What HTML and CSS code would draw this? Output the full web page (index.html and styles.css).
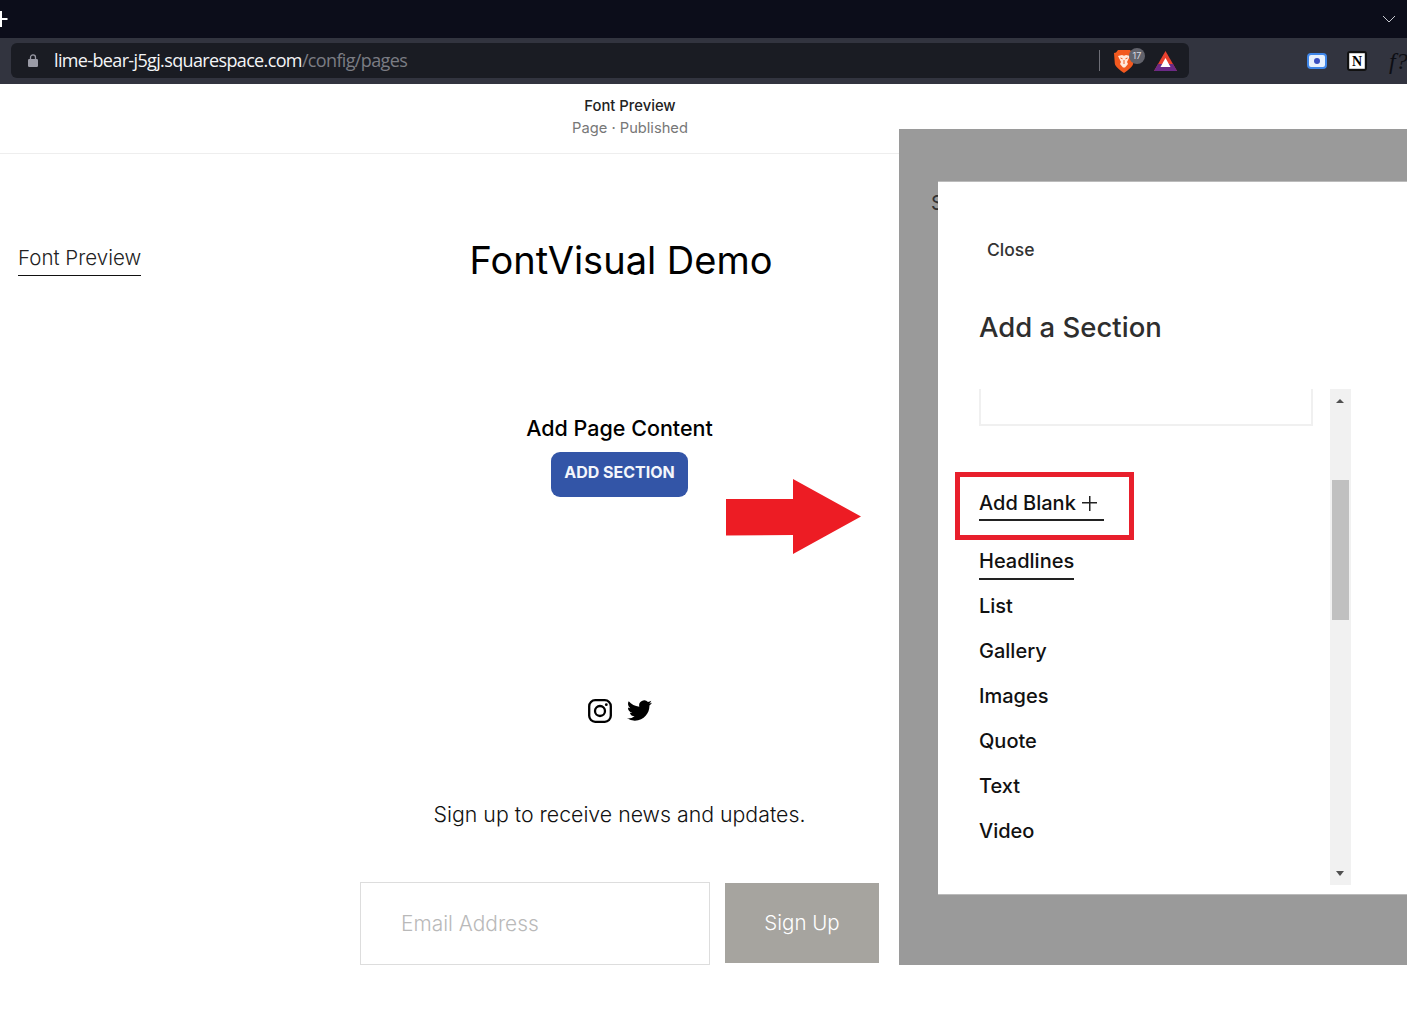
FILE: index.html
```html
<!DOCTYPE html>
<html>
<head>
    <title>Font Preview - Squarespace</title>
    <link rel="stylesheet" href="styles.css">
</head>
<body>
    <div class="tabbar">
        <svg class="new-tab" width="8" height="16" viewBox="0 0 8 16"><path d="M0 7h7.500v2H0zM0 0h2v16H0z" fill="#fff"/></svg>
        <svg class="tab-chevron" width="14" height="8" viewBox="0 0 14 8"><path d="M1 1l6 6 6-6" fill="none" stroke="#c8c9d0" stroke-width="1"/></svg>
    </div>
    <div class="toolbar">
        <div class="omnibox">
            <svg class="lock" width="10" height="13" viewBox="0 0 10 13"><path d="M2.500 5V3.400a2.500 2.500 0 0 1 5 0V5" fill="none" stroke="#9a9ba6" stroke-width="1.300"/><rect x="0" y="5" width="10" height="8" rx="1.200" fill="#9a9ba6"/></svg>
            <span class="url">lime-bear-j5gj.squarespace.com<span class="url-path">/config/pages</span></span>
            <span class="omni-sep"></span>
            <span class="brave">
                <svg width="20" height="23" viewBox="0 0 20 23"><path d="M4 0h12l2 2.500 2 .5-.8 10.500c-.3 3-5.700 7-9.200 9.500C6.500 20.500 1.100 16.500.8 13.500L0 3l2-.5z" fill="#f2591f"/><path d="M4 6l4-1 2 .8L12 5l4 1-1.500 3-1.500 3 1 2-3 3.500h-2L6 14l1-2-1.500-3z" fill="#ffe9dc"/><path d="M6.500 8l2 .8M13.500 8l-2 .8M10 10v4" fill="none" stroke="#f2591f" stroke-width="1"/></svg>
                <span class="brave-count">17</span>
            </span>
            <svg class="bat" width="23" height="20" viewBox="0 0 23 20"><path d="M11.500 0L23 20H0z" fill="#e8412f"/><path d="M0 20l4-7h15l4 7z" fill="#6b2a86"/><path d="M11.500 7l5 9h-10z" fill="#fff"/></svg>
        </div>
        <svg class="ext-record" width="20" height="16" viewBox="0 0 20 16"><rect x="1" y="1" width="18" height="14" rx="3" fill="#e8f1fd" stroke="#3f86e8" stroke-width="2"/><circle cx="10" cy="8" r="3" fill="#3a4fc0"/></svg>
        <span class="ext-notion">N</span>
        <span class="ext-font">f?</span>
    </div>

    <div class="workspace">
        <div class="editor">
            <header class="page-head">
                <div class="page-name">Font Preview</div>
                <div class="page-status">Page · Published</div>
            </header>
            <div class="site">
                <nav class="site-nav"><a class="site-nav-link">Font Preview</a></nav>
                <main class="site-main">
                    <h1 class="site-title">FontVisual Demo</h1>
                    <h2 class="empty-title">Add Page Content</h2>
                    <button class="add-section">ADD SECTION</button>
                    <div class="social">
                        <svg width="24" height="24" viewBox="0 0 24 24"><rect x="1.200" y="1.200" width="21.600" height="21.600" rx="6" fill="none" stroke="#000" stroke-width="2.300"/><circle cx="12" cy="12" r="5" fill="none" stroke="#000" stroke-width="2.300"/><circle cx="18.300" cy="5.700" r="1.400" fill="#000"/></svg>
                        <svg width="25" height="25" viewBox="0 0 24 24"><path d="M23.953 4.57a10 10 0 01-2.825.775 4.958 4.958 0 002.163-2.723c-.951.555-2.005.959-3.127 1.184a4.92 4.92 0 00-8.384 4.482C7.69 8.095 4.067 6.13 1.64 3.162a4.822 4.822 0 00-.666 2.475c0 1.71.87 3.213 2.188 4.096a4.904 4.904 0 01-2.228-.616v.06a4.923 4.923 0 003.946 4.827 4.996 4.996 0 01-2.212.085 4.936 4.936 0 004.604 3.417 9.867 9.867 0 01-6.102 2.105c-.39 0-.779-.023-1.17-.067a13.995 13.995 0 007.557 2.209c9.053 0 13.998-7.496 13.998-13.985 0-.21 0-.42-.015-.63A9.935 9.935 0 0024 4.59z" fill="#000"/></svg>
                    </div>
                    <p class="signup-text">Sign up to receive news and updates.</p>
                    <form class="signup-form">
                        <div class="email-input">Email Address</div>
                        <div class="signup-btn">Sign Up</div>
                    </form>
                </main>
            </div>
            <svg class="red-arrow" width="135" height="75" viewBox="0 0 135 75"><path d="M0 20h67V0l68 37.500L67 75V56l-67 .5z" fill="#ed1c24"/></svg>
        </div>

        <aside class="panel">
            <span class="panel-behind">S</span>
            <div class="modal">
                <div class="modal-close">Close</div>
                <h2 class="modal-title">Add a Section</h2>
                <div class="modal-body">
                    <div class="section-list">
                        <div class="card-end"></div>
                        <div class="add-blank-box">
                            <a class="add-blank">Add Blank <span class="plus"></span></a>
                        </div>
                        <a class="cat cat-active">Headlines</a>
                        <a class="cat">List</a>
                        <a class="cat">Gallery</a>
                        <a class="cat">Images</a>
                        <a class="cat">Quote</a>
                        <a class="cat">Text</a>
                        <a class="cat">Video</a>
                    </div>
                    <div class="scrollbar">
                        <span class="arrow-up"></span>
                        <span class="thumb"></span>
                        <span class="arrow-down"></span>
                    </div>
                </div>
            </div>
        </aside>
    </div>
</body>
</html>
```

FILE: styles.css
```css
html, body { margin: 0; padding: 0; background: #fff; overflow: hidden; }
body { font-family: Inter, "Liberation Sans", sans-serif; color: #000; height: 1030px; }
h1, h2, p { margin: 0; font-weight: 400; }

/* browser chrome */
.tabbar {
    height: 38px;
    background: #0c0d1a;
    display: flex;
    justify-content: space-between;
    align-items: center;
    padding-right: 11px;
    overflow: hidden;
}
.toolbar {
    height: 46px;
    background: #32343f;
    display: flex;
    align-items: center;
    padding-left: 11px;
    overflow: hidden;
}
.omnibox {
    flex: none;
    width: 1178px;
    height: 35px;
    margin-top: -1px;
    background: #1a1c23;
    border-radius: 6px;
    display: flex;
    align-items: center;
    padding-left: 17px;
    box-sizing: border-box;
}
.lock { margin-right: 16px; }
.url {
    font-family: "Open Sans", sans-serif;
    font-size: 18px;
    letter-spacing: -0.64px;
    line-height: 35px;
    margin-top: -1px;
    color: #f4f5f7;
    flex: 1;
}
.url-path { color: #7b7c84; }
.omni-sep { width: 1px; height: 21px; background: #6d6e76; margin-right: 14px; }
.brave { display: flex; align-items: flex-end; width: 40px; height: 25px; position: relative; }
.brave-count {
    position: absolute;
    left: 15px;
    top: 0;
    width: 16px;
    height: 16px;
    border-radius: 50%;
    background: #62636c;
    color: #dcdde2;
    font-size: 9px;
    line-height: 16px;
    text-align: center;
}
.bat { margin-right: 12px; }
.ext-record { flex: none; margin-left: 118px; }
.ext-notion {
    flex: none;
    width: 20px;
    height: 20px;
    margin-left: 20px;
    background: #fff;
    border: 2px solid #111;
    border-radius: 3px;
    box-shadow: inset 0 0 0 1px #ccc;
    box-sizing: border-box;
    color: #000;
    font-family: "Liberation Serif", serif;
    font-weight: 700;
    font-size: 14px;
    line-height: 17px;
    text-align: center;
}
.ext-font {
    flex: none;
    margin-left: 22px;
    font-family: "Liberation Serif", serif;
    font-style: italic;
    font-size: 24px;
    color: #0d0e14;
    white-space: nowrap;
}

/* page being edited */
.workspace { display: flex; align-items: flex-start; }
.editor { width: 899px; flex: none; position: relative; }
.page-head {
    height: 69px;
    border-bottom: 1px solid #eee;
    padding-left: 361px;
    text-align: center;
}
.page-name { padding-top: 14px; font-size: 14.800px; line-height: 17px; font-weight: 500; color: #222; }
.page-status { padding-top: 5px; font-size: 14.700px; line-height: 17px; color: #777; }
.site { display: grid; grid-template-columns: 340px 1fr; }
.site-nav { padding: 92px 0 0 18px; }
.site-nav-link {
    display: inline-block;
    font-size: 20.500px;
    font-weight: 300;
    line-height: 24px;
    padding-bottom: 5px;
    color: #222;
    border-bottom: 1px solid #111;
}
.site-main { display: flex; flex-direction: column; align-items: center; padding: 83px 20px 0; }
.site-title { font-size: 38px; line-height: 46px; font-weight: 400; margin-left: 3px; }
.empty-title { margin-top: 131px; font-size: 21.500px; line-height: 28px; font-weight: 500; }
.add-section {
    margin-top: 10px;
    width: 137px;
    height: 45px;
    background: #3355a7;
    color: #f4f6fb;
    border: none;
    border-radius: 9px;
    font-family: Inter, sans-serif;
    font-size: 16px;
    font-weight: 700;
    padding: 0 0 6px;
}
.social { margin-top: 201px; height: 25px; display: flex; gap: 15px; align-items: center; }
.signup-text { margin-top: 77px; font-size: 21.300px; font-weight: 300; line-height: 28px; color: #111; }
.signup-form { margin-top: 54px; display: flex; align-items: flex-start; gap: 15px; }
.email-input {
    width: 350px;
    height: 83px;
    box-sizing: border-box;
    border: 1px solid #ddd;
    padding-left: 40px;
    font-size: 20.900px;
    font-weight: 300;
    line-height: 81px;
    color: #b9b9b9;
}
.signup-btn {
    width: 154px;
    height: 80px;
    margin-top: 1px;
    background: #a6a49f;
    color: #fff;
    font-size: 20.500px;
    font-weight: 300;
    line-height: 80px;
    text-align: center;
}
.red-arrow { position: absolute; left: 726px; top: 395px; }

/* add section panel */
.panel { flex: 1; position: relative; height: 836px; margin-top: 45px; background: #9a9a9a; }
.panel-behind {
    position: absolute;
    left: 32px;
    top: 62px;
    font-size: 20px;
    color: #333;
}
.modal {
    position: absolute;
    left: 39px;
    right: 0;
    top: 52px;
    height: 714px;
    background: #fff;
    border-top: 1px solid #bbb;
    border-bottom: 1px solid #bbb;
    box-sizing: border-box;
}
.modal-close { padding: 57px 0 0 49px; font-size: 17.500px; line-height: 22px; font-weight: 500; color: #333; }
.modal-title {
    margin: 48px 0 0 41px;
    font-size: 27.500px;
    line-height: 36px;
    font-weight: 500;
    color: #2e2e2e;
}
.modal-body { display: flex; margin: 44px 0 0 41px; height: 496px; }
.section-list { width: 334px; display: flex; flex-direction: column; align-items: flex-start; }
.card-end {
    width: 100%;
    height: 37px;
    box-sizing: border-box;
    border: 2px solid #f0f0f0;
    border-top: none;
}
.add-blank-box {
    margin: 46px 0 0 -24px;
    width: 179px;
    height: 68px;
    box-sizing: border-box;
    border: 5px solid #e81f2c;
    padding: 15px 0 0 19px;
}
.add-blank {
    display: inline-flex;
    align-items: center;
    width: 125px;
    height: 29px;
    box-sizing: border-box;
    border-bottom: 2px solid #222;
    font-size: 20px;
    line-height: 24px;
    font-weight: 500;
    padding-bottom: 5px;
    gap: 6px;
    color: #111;
}
.plus {
    width: 15px;
    height: 15px;
    background: linear-gradient(#222, #222) center / 100% 1.500px no-repeat, linear-gradient(#222, #222) center / 1.500px 100% no-repeat;
}
.cat {
    display: block;
    margin-top: 15px;
    font-size: 20px;
    line-height: 30px;
    font-weight: 500;
    color: #111;
}
.cat-active { margin: 6px 0 -4px; border-bottom: 2px solid #222; padding-bottom: 2px; }
.scrollbar {
    width: 21px;
    margin-left: 17px;
    background: #f1f1f1;
    position: relative;
}
.thumb { position: absolute; left: 2px; top: 91px; width: 17px; height: 140px; background: #c0c0c0; }
.arrow-up, .arrow-down {
    position: absolute;
    left: 6px;
    width: 0;
    height: 0;
    border-left: 4.500px solid transparent;
    border-right: 4.500px solid transparent;
}
.arrow-up { top: 10px; border-bottom: 4px solid #505050; }
.arrow-down { bottom: 9px; border-top: 5px solid #505050; }
```
